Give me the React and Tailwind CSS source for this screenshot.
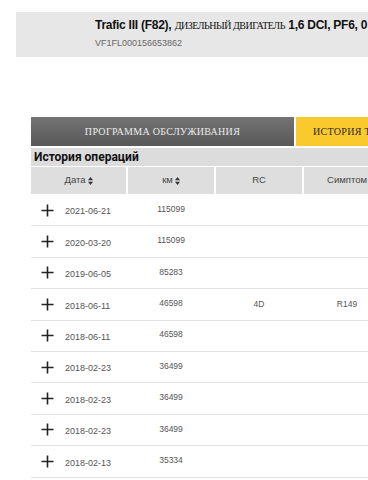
import React from "react";

const rows = [
  { date: "2021-06-21", km: "115099", rc: "", sym: "" },
  { date: "2020-03-20", km: "115099", rc: "", sym: "" },
  { date: "2019-06-05", km: "85283", rc: "", sym: "" },
  { date: "2018-06-11", km: "46598", rc: "4D", sym: "R149" },
  { date: "2018-06-11", km: "46598", rc: "", sym: "" },
  { date: "2018-02-23", km: "36499", rc: "", sym: "" },
  { date: "2018-02-23", km: "36499", rc: "", sym: "" },
  { date: "2018-02-23", km: "36499", rc: "", sym: "" },
  { date: "2018-02-13", km: "35334", rc: "", sym: "" },
];

const SortIcon = () => (
  <svg width="5" height="8" viewBox="0 0 5 8" className="ml-[2px] inline-block">
    <path d="M2.5 0 L5 3.2 L0 3.2 Z" fill="#333" />
    <path d="M2.5 8 L5 4.8 L0 4.8 Z" fill="#333" />
  </svg>
);

const Plus = () => (
  <svg width="13" height="13" viewBox="0 0 13 13">
    <path d="M6.5 0.5 V12.5 M0.5 6.5 H12.5" stroke="#222" strokeWidth="1.6" />
  </svg>
);

export default function App() {
  return (
    <div className="w-[368px] h-[480px] overflow-hidden bg-white [font-family:'Liberation_Sans',Arial,sans-serif]">
      {/* vehicle header */}
      <div className="pt-[12px] pl-[16px]">
        <div className="w-[700px] h-[45px] bg-[#e7e7e7] pl-[79px] pt-[6px]">
          <div className="whitespace-nowrap text-[12px] leading-[14px] text-[#111]">
            <span className="font-bold tracking-[-0.25px]">Trafic III (F82),</span>{" "}
            <span className="[font-family:'Liberation_Serif',serif] text-[10px] tracking-[-0.5px]">
              ДИЗЕЛЬНЫЙ ДВИГАТЕЛЬ
            </span>{" "}
            <span className="font-bold tracking-[-0.25px]">1,6 DCI, PF6, 0</span>
          </div>
          <div className="mt-[4px] text-[9px] leading-[12px] text-[#666]">VF1FL000156653862</div>
        </div>
      </div>

      <div className="ml-[31px] mt-[60px] w-[600px]">
        {/* tabs */}
        <div className="flex gap-[2px] h-[29px]">
          <div className="w-[263px] flex items-center justify-center bg-gradient-to-b from-[#747474] to-[#585858] text-[#ececec] [font-family:'Liberation_Serif',serif] text-[10px] tracking-[0.3px]">
            ПРОГРАММА ОБСЛУЖИВАНИЯ
          </div>
          <div className="w-[300px] flex items-center pl-[17px] bg-[#fac92e] text-[#2a2a2a] [font-family:'Liberation_Serif',serif] text-[10px] tracking-[0.3px]">
            ИСТОРИЯ ТЕХНИЧЕСКОГО ОБСЛУЖИВАНИЯ
          </div>
        </div>

        {/* section title */}
        <div className="mt-[2px] h-[18px] bg-[#dcdcdc] pl-[3px] flex items-center [font-family:Roboto,sans-serif] font-bold text-[12px] text-[#111]">
          История операций
        </div>

        {/* table header */}
        <div className="mt-[1px] h-[27px] flex gap-[2px] text-[9.5px] text-[#444]">
          <div className="w-[95px] bg-[#dedede] flex items-center justify-center">
            Дата
            <SortIcon />
          </div>
          <div className="w-[86px] bg-[#dedede] flex items-center justify-center">
            км
            <SortIcon />
          </div>
          <div className="w-[86px] bg-[#dedede] flex items-center justify-center">RC</div>
          <div className="w-[86px] bg-[#dedede] flex items-center justify-center">Симптом</div>
          <div className="w-[200px] bg-[#dedede]" />
        </div>

        {/* rows */}
        <div className="mt-[1px]">
          {rows.map((r, i) => (
            <div key={i} className="h-[31.4px] border-b border-[#e2e2e2] flex text-[9px] text-[#555]">
              <div className="w-[95px] flex items-center pl-[10px]">
                <Plus />
                <span className="ml-[11px] pt-[4px]">{r.date}</span>
              </div>
              <div className="w-[88px] flex items-center justify-center pl-[2px] pb-[2px] text-[8.5px]">{r.km}</div>
              <div className="w-[88px] flex items-center justify-center pl-[2px] text-[8.5px]">{r.rc}</div>
              <div className="w-[88px] flex items-center justify-center pl-[2px] text-[8.5px]">{r.sym}</div>
            </div>
          ))}
        </div>
      </div>
    </div>
  );
}
